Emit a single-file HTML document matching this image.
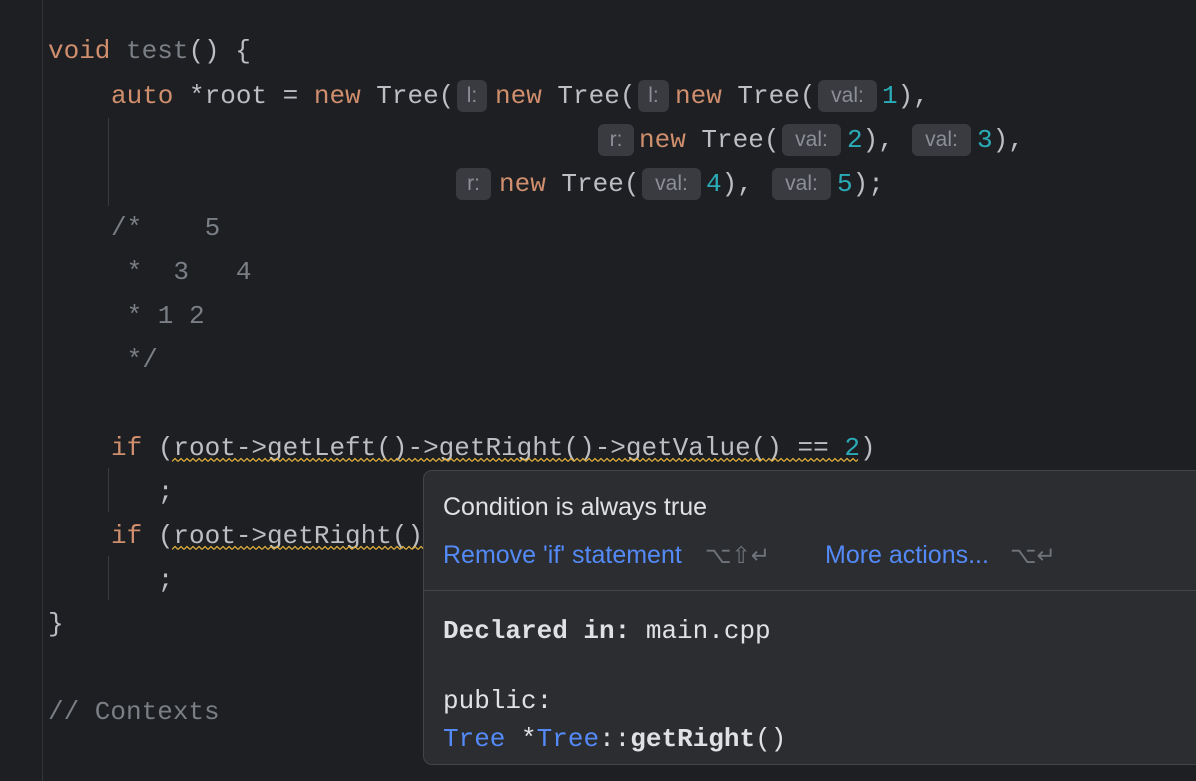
<!DOCTYPE html>
<html><head><style>
body{margin:0;width:1196px;height:781px;background:#1e1f22;overflow:hidden;position:relative;font-family:"Liberation Mono",monospace;font-size:26px;color:#bcbec4}
.a{position:absolute;white-space:pre;line-height:44px;height:44px}
.k{color:#cf8e6d}.n{color:#2aacb8}.c{color:#7a7e85}.g{color:#7a7e85}
.h{position:absolute;height:32px;background:#393b40;border-radius:6px;color:#8c8f95;font-family:"Liberation Sans",sans-serif;font-size:21px;line-height:32px;text-align:center}
.v{position:absolute;width:1px;background:#393b40}
.pop{position:absolute;left:423px;top:470px;width:800px;height:293px;background:#2b2d30;border:1px solid #43454a;border-radius:9px}
.s{font-family:"Liberation Sans",sans-serif}
</style></head><body>
<div class="v" style="left:42px;top:0;height:781px;background:#313438"></div>
<div class="v" style="left:108px;top:118px;height:88px"></div>
<div class="v" style="left:108px;top:468px;height:44px"></div>
<div class="v" style="left:108px;top:556px;height:44px"></div>

<div class="a" style="left:48px;top:29px"><span class="k">void</span> <span class="g">test</span>() {</div>
<div class="a" style="left:111px;top:74px"><span class="k">auto</span> *root = <span class="k">new</span> Tree(</div>
<div class="h" style="left:457px;top:80px;width:30px">l:</div>
<div class="a" style="left:495px;top:74px"><span class="k">new</span> Tree(</div>
<div class="h" style="left:638px;top:80px;width:31px">l:</div>
<div class="a" style="left:675px;top:74px"><span class="k">new</span> Tree(</div>
<div class="h" style="left:818px;top:80px;width:59px">val:</div>
<div class="a" style="left:882px;top:74px"><span class="n">1</span>),</div>

<div class="h" style="left:598px;top:124px;width:36px">r:</div>
<div class="a" style="left:639px;top:118px"><span class="k">new</span> Tree(</div>
<div class="h" style="left:782px;top:124px;width:59px">val:</div>
<div class="a" style="left:847px;top:118px"><span class="n">2</span>),</div>
<div class="h" style="left:912px;top:124px;width:59px">val:</div>
<div class="a" style="left:977px;top:118px"><span class="n">3</span>),</div>

<div class="h" style="left:456px;top:168px;width:35px">r:</div>
<div class="a" style="left:499px;top:162px"><span class="k">new</span> Tree(</div>
<div class="h" style="left:642px;top:168px;width:59px">val:</div>
<div class="a" style="left:706px;top:162px"><span class="n">4</span>),</div>
<div class="h" style="left:772px;top:168px;width:59px">val:</div>
<div class="a" style="left:837px;top:162px"><span class="n">5</span>);</div>

<div class="a c" style="left:111px;top:206px">/*    5</div>
<div class="a c" style="left:111px;top:250px"> *  3   4</div>
<div class="a c" style="left:111px;top:294px"> * 1 2</div>
<div class="a c" style="left:111px;top:338px"> */</div>

<div class="a" style="left:111px;top:426px"><span class="k">if</span> (root-&gt;getLeft()-&gt;getRight()-&gt;getValue() == <span class="n">2</span>)</div>
<svg style="position:absolute;left:172px;top:457px" width="686" height="6"><defs><pattern id="z" width="6" height="6" patternUnits="userSpaceOnUse"><path d="M0 4.5L3 1.5L6 4.5" fill="none" stroke="#e5b53d" stroke-width="1.2"/></pattern></defs><rect width="686" height="6" fill="url(#z)"/></svg>
<div class="a" style="left:111px;top:470px">   ;</div>
<div class="a" style="left:111px;top:514px"><span class="k">if</span> (root-&gt;getRight()</div>
<svg style="position:absolute;left:172px;top:545px" width="252" height="6"><rect width="252" height="6" fill="url(#z)"/></svg>
<div class="a" style="left:111px;top:558px">   ;</div>
<div class="a" style="left:48px;top:602px">}</div>
<div class="a c" style="left:48px;top:690px">// Contexts</div>

<div class="pop">
<div class="a s" style="left:19px;top:14px;font-size:25px;color:#dfe1e5">Condition is always true</div>
<div class="a s" style="left:19px;top:62px;font-size:25px;color:#548af7">Remove 'if' statement</div>
<div class="a s" style="left:281px;top:62px;font-size:23px;color:#6f737a">⌥⇧↵</div>
<div class="a s" style="left:401px;top:62px;font-size:25px;color:#548af7">More actions...</div>
<div class="a s" style="left:586px;top:62px;font-size:23px;color:#6f737a">⌥↵</div>
<div style="position:absolute;left:0;top:119px;width:800px;height:1px;background:#43454a"></div>
<div class="a" style="left:19px;top:138px;color:#dfe1e5"><b>Declared in:</b> main.cpp</div>
<div class="a" style="left:19px;top:208px;color:#dfe1e5">public:</div>
<div class="a" style="left:19px;top:246px;color:#dfe1e5"><span style="color:#548af7">Tree</span> *<span style="color:#548af7">Tree</span>::<b>getRight</b>()</div>
</div>
</body></html>
